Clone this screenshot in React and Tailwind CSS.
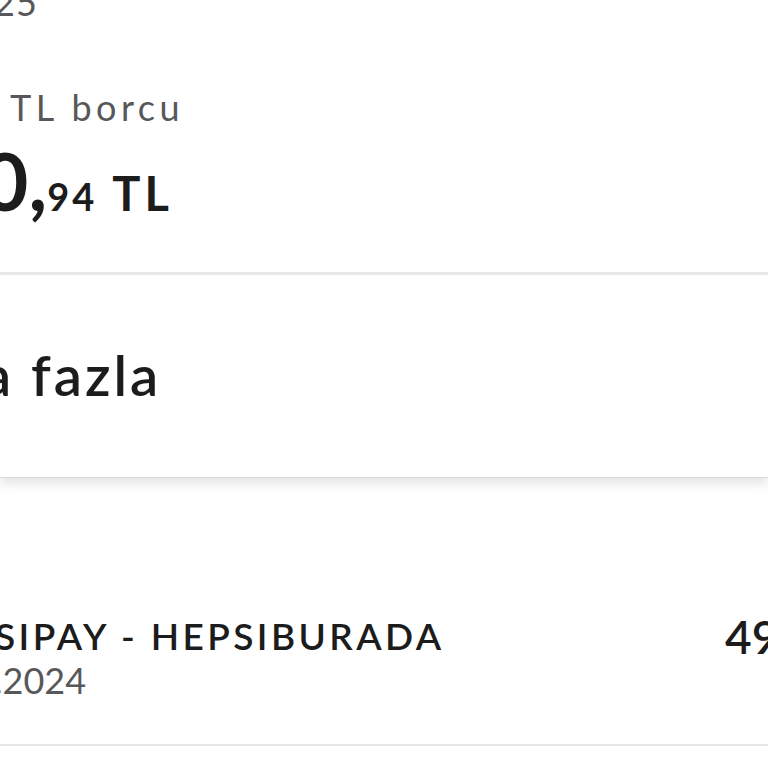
function App() {
  return (
    <div className="w-[768px] h-[768px] overflow-hidden bg-white font-['Lato',sans-serif] text-[#1c1c1c]">
      {/* Balance summary */}
      <section className="h-[272px] flex flex-col">
        <p className="-mt-[16px] -ml-[6px] text-[36px] leading-none tracking-[1px] text-[#58585a]">25</p>
        <p className="mt-[69px] ml-[10px] text-[36px] leading-none tracking-[4.5px] text-[#58585a] whitespace-nowrap">
          TL borcu
        </p>
        <p className="mt-[15px] -ml-[18px] flex items-baseline leading-none font-bold whitespace-nowrap">
          <span className="text-[80px]">0,</span>
          <span className="text-[38px] tracking-[3px]">94</span>
          <span className="ml-[15px] text-[47px] tracking-[4px]">TL</span>
        </p>
      </section>

      <div className="h-[3px] bg-[#e8e8e8]" />

      {/* Limit card */}
      <section className="relative h-[203px] flex flex-col bg-white border-b border-[#d8d8d8] shadow-[0_6px_10px_rgba(0,0,0,0.10)]">
        <p className="pt-[72px] -ml-[17px] text-[56px] leading-none font-semibold tracking-[3px] whitespace-nowrap">
          a fazla
        </p>
      </section>

      {/* Transactions */}
      <section className="h-[268px] border-b-2 border-[#e6e6e6] box-border flex items-start">
        <div className="w-[725px] shrink-0 pt-[139px] flex flex-col">
          <p className="-ml-[5px] text-[37px] leading-none font-semibold tracking-[3.4px] whitespace-nowrap">
            SIPAY - HEPSIBURADA
          </p>
          <p className="mt-[8px] -ml-[6px] text-[36px] leading-none text-[#58585a]">.2024</p>
        </div>
        <p className="pt-[136px] text-[46px] leading-none font-semibold whitespace-nowrap">49,90 TL</p>
      </section>
    </div>
  );
}

export default App;
